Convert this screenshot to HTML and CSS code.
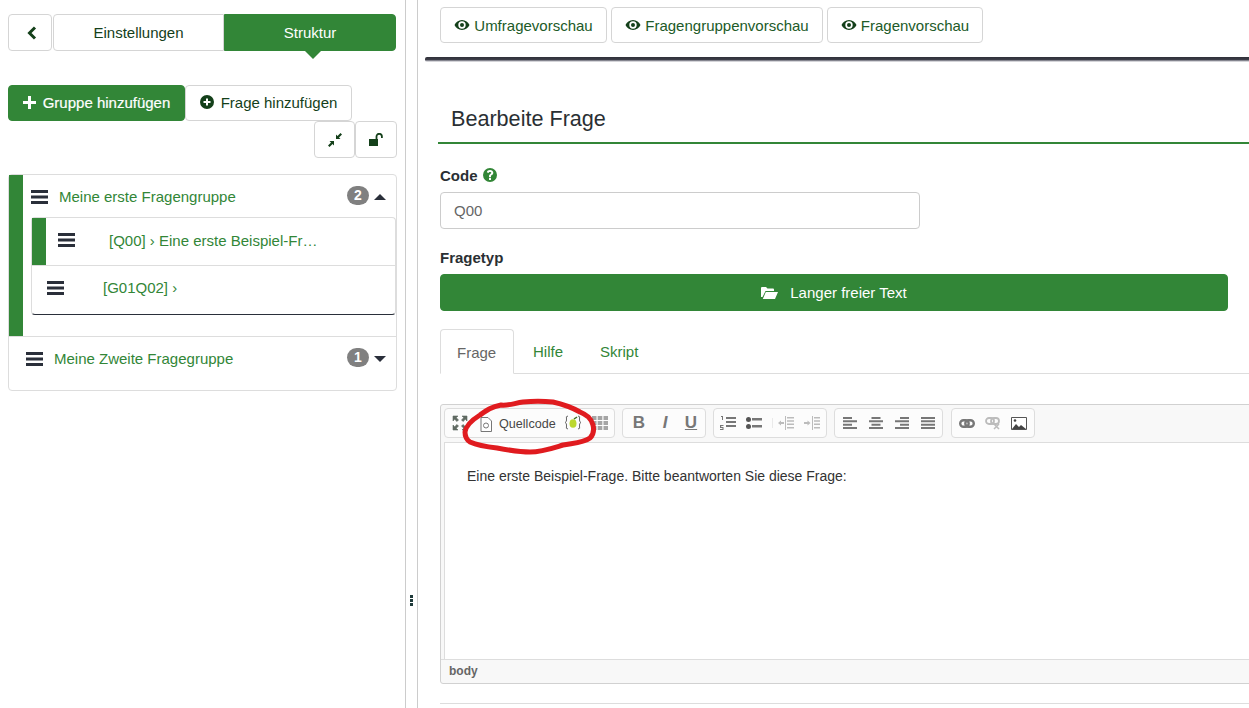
FILE: index.html
```html
<!DOCTYPE html>
<html lang="de">
<head>
    <meta charset="UTF-8">
    <title>Bearbeite Frage</title>
    <link rel="stylesheet" href="styles.css">
</head>
<body>
    <svg class="defs" width="0" height="0">
        <symbol id="eye" viewBox="0 0 16 12"><path d="M8 1C4.500 1 1.800 3.200 .5 6c1.300 2.800 4 5 7.500 5s6.200-2.200 7.500-5C14.200 3.200 11.500 1 8 1zm0 8.700A3.700 3.700 0 1 1 8 2.300a3.700 3.700 0 0 1 0 7.400zM8 4a2 2 0 1 0 0 4 2 2 0 0 0 0-4z" fill-rule="evenodd"/></symbol>
        <symbol id="bars" viewBox="0 0 17 14"><path d="M0 0h17v3H0zM0 5.500h17v3H0zM0 11h17v3H0z"/></symbol>
    </svg>

    <aside class="sidebar">
        <div class="tabs-row">
            <button class="btn back-btn">
                <svg width="10" height="14" viewBox="0 0 10 14"><path d="M8 1.500 2.500 7 8 12.500" fill="none" stroke="#14401a" stroke-width="3"/></svg>
            </button>
            <button class="btn side-tab">Einstellungen</button>
            <button class="btn side-tab side-tab-active">Struktur</button>
        </div>

        <div class="add-row">
            <button class="btn btn-green add-group">
                <svg width="13" height="13" viewBox="0 0 13 13"><path d="M5 0h3v5h5v3H8v5H5V8H0V5h5z" fill="#fff"/></svg>
                Gruppe hinzufügen
            </button>
            <button class="btn add-question">
                <svg width="14" height="14" viewBox="0 0 14 14"><path d="M7 0a7 7 0 1 0 0 14A7 7 0 0 0 7 0zM6 3.500h2V6h2.500v2H8v2.500H6V8H3.500V6H6z" fill="#14401a" fill-rule="evenodd"/></svg>
                Frage hinzufügen
            </button>
        </div>

        <div class="tool-row">
            <button class="btn tool-btn">
                <svg width="14" height="14" viewBox="0 0 14 14"><path d="M8 1.500V6h4.500L11 4.500 14 1.500 12.500 0l-3 3zM6 12.500V8H1.500L3 9.500 0 12.500 1.500 14l3-3z" fill="#14401a"/></svg>
            </button>
            <button class="btn tool-btn">
                <svg width="15" height="13" viewBox="0 0 15 13"><path d="M0 6h9v7H0z" fill="#14401a"/><path d="M7.500 6V3.500a2.700 2.700 0 0 1 5.400 0V5" fill="none" stroke="#14401a" stroke-width="1.800"/></svg>
            </button>
        </div>

        <div class="group-list">
            <div class="group group-open">
                <div class="group-head">
                    <svg class="bars" width="17" height="14"><use href="#bars"/></svg>
                    <span class="group-name">Meine erste Fragengruppe</span>
                    <span class="badge">2</span>
                    <span class="caret-up"></span>
                </div>
                <div class="questions">
                    <div class="question question-active">
                        <svg class="bars" width="17" height="14"><use href="#bars"/></svg>
                        <span class="q-name">[Q00] › Eine erste Beispiel-Fr…</span>
                    </div>
                    <div class="question question-second">
                        <svg class="bars" width="17" height="14"><use href="#bars"/></svg>
                        <span class="q-name">[G01Q02] ›</span>
                    </div>
                </div>
            </div>
            <div class="group group-closed">
                <div class="group-head">
                    <svg class="bars" width="17" height="14"><use href="#bars"/></svg>
                    <span class="group-name">Meine Zweite Fragegruppe</span>
                    <span class="badge">1</span>
                    <span class="caret-down"></span>
                </div>
            </div>
        </div>
    </aside>

    <div class="gutter"><span class="grip"></span></div>

    <main class="content">
        <div class="preview-bar">
            <button class="btn preview-btn preview-survey"><svg width="16" height="12"><use href="#eye"/></svg>Umfragevorschau</button>
            <button class="btn preview-btn preview-group"><svg width="16" height="12"><use href="#eye"/></svg>Fragengruppenvorschau</button>
            <button class="btn preview-btn preview-question"><svg width="16" height="12"><use href="#eye"/></svg>Fragenvorschau</button>
        </div>
        <div class="bar-shadow"></div>

        <div class="form-area">
            <h1 class="page-title">Bearbeite Frage</h1>

            <label class="field-label">Code
                <svg width="14" height="14" viewBox="0 0 14 14"><path d="M7 0a7 7 0 1 0 0 14A7 7 0 0 0 7 0zM6 9.800h2V12H6zM7 2c1.900 0 3.300 1.100 3.300 2.800 0 1.200-.7 1.800-1.500 2.300-.6.400-.8.600-.8 1.200V9H6v-.9c0-1.100.5-1.700 1.300-2.200.6-.4 1-.6 1-1.100S7.800 3.900 7 3.900c-.9 0-1.300.5-1.500 1.200L3.800 4.200C4.200 2.900 5.300 2 7 2z" fill="#328637" fill-rule="evenodd"/></svg>
            </label>
            <input class="code-input" type="text" value="Q00">

            <label class="field-label type-label">Fragetyp</label>
            <button class="btn btn-green type-btn">
                <svg width="17" height="13" viewBox="0 0 17 13"><path d="M0 2q0-1 1-1h4l1.500 1.500H12q1 0 1 1V5H4.500L1.500 11 0 11zM4.800 6H17l-3 7H1.800z" fill="#fff"/></svg>
                Langer freier Text
            </button>

            <nav class="q-tabs">
                <span class="q-tab q-tab-active">Frage</span>
                <span class="q-tab">Hilfe</span>
                <span class="q-tab q-tab-script">Skript</span>
            </nav>

            <div class="editor">
                <div class="toolbar">
                    <div class="tool-group group-source">
                        <span class="tb-icon"><svg width="16" height="16" viewBox="0 0 16 16"><path d="M1 6V1h5L4.300 2.700 6.500 5 5 6.500 2.700 4.300zM15 6V1h-5l1.700 1.700L9.500 5 11 6.500l2.300-2.200zM1 10v5h5l-1.700-1.700L6.500 11 5 9.500l-2.300 2.200zM15 10v5h-5l1.700-1.700L9.500 11l1.500-1.500 2.300 2.200z" fill="#5f6a62" stroke="#5f6a62" stroke-width=".6"/></svg></span>
                        <span class="tb-source">
                            <svg width="12" height="15" viewBox="0 0 12 15"><path d="M1 .5h7l3.500 3.500v10.500H1z" fill="#fff" stroke="#777"/><circle cx="6" cy="8.500" r="2.500" fill="none" stroke="#777"/></svg>
                            Quellcode
                        </span>
                        <span class="tb-plugin">
                            <svg width="18" height="15" viewBox="0 0 18 15"><path d="M4 1Q1.500 1 2.500 4 3 7 1 7.500 3 8 2.500 11 1.500 14 4 14M14 1q2.500 0 1.500 3-.5 3 1.500 3.500-2 .5-1.500 3.500 1 3-1.500 3" fill="none" stroke="#666"/><ellipse cx="9" cy="8.500" rx="3.500" ry="4.300" fill="#bcd82e"/><path d="M10 4l3-2" stroke="#3e6a1e" stroke-width="1.500"/></svg>
                        </span>
                        <span class="tb-icon tb-grid"><svg width="16" height="14" viewBox="0 0 16 14"><path d="M0 0h4.500v4H0zM5.700 0h4.600v4H5.700zM11.500 0H16v4h-4.500zM0 5h4.500v4H0zM5.700 5h4.600v4H5.700zM11.500 5H16v4h-4.500zM0 10h4.500v4H0zM5.700 10h4.600v4H5.700zM11.500 10H16v4h-4.500z" fill="#a5a5a5"/></svg></span>
                    </div>
                    <div class="tool-group group-format">
                        <span class="tb-icon tb-letter">B</span>
                        <span class="tb-icon tb-letter tb-italic">I</span>
                        <span class="tb-icon tb-letter tb-under">U</span>
                    </div>
                    <div class="tool-group group-lists">
                        <span class="tb-icon"><svg width="16" height="14" viewBox="0 0 16 14"><path d="M1 0h2v4H2V1H1zM0 9h3.500v1H1.200v1H3.500v3H0v-1h2.500v-1H0zM6 1h10v2H6zM6 5h10v2H6zM6 9h10v2H6z" fill="#777"/></svg></span>
                        <span class="tb-icon"><svg width="16" height="12" viewBox="0 0 16 12"><circle cx="2.500" cy="2.500" r="2.500" fill="#555"/><circle cx="2.500" cy="9.500" r="2.500" fill="#555"/><path d="M6 1h10v2.500H6zM6 8h10v2.500H6z" fill="#777"/></svg></span>
                        <span class="tb-icon tb-off tb-sep"><svg width="16" height="14" viewBox="0 0 16 14"><path d="M7 0h1v14H7zM0 7l3-2.500V6h3v2H3v1.500zM9 1h7v1.500H9zM9 4.300h7v1.500H9zM9 7.600h7v1.500H9zM9 11h7v1.500H9z" fill="#888"/></svg></span>
                        <span class="tb-icon tb-off"><svg width="16" height="14" viewBox="0 0 16 14"><path d="M8 0h1v14H8zM6.500 7l-3-2.500V6H0v2h3.500v1.500zM10 1h6v1.500h-6zM10 4.300h6v1.500h-6zM10 7.600h6v1.500h-6zM10 11h6v1.500h-6z" fill="#888"/></svg></span>
                    </div>
                    <div class="tool-group">
                        <span class="tb-icon"><svg width="14" height="12" viewBox="0 0 14 12"><path d="M0 0h9v2H0zM0 3.300h14v2H0zM0 6.700h9v2H0zM0 10h14v2H0z" fill="#777"/></svg></span>
                        <span class="tb-icon"><svg width="14" height="12" viewBox="0 0 14 12"><path d="M2.500 0h9v2h-9zM0 3.300h14v2H0zM2.500 6.700h9v2h-9zM0 10h14v2H0z" fill="#777"/></svg></span>
                        <span class="tb-icon"><svg width="14" height="12" viewBox="0 0 14 12"><path d="M5 0h9v2H5zM0 3.300h14v2H0zM5 6.700h9v2H5zM0 10h14v2H0z" fill="#777"/></svg></span>
                        <span class="tb-icon"><svg width="14" height="12" viewBox="0 0 14 12"><path d="M0 0h14v2H0zM0 3.300h14v2H0zM0 6.700h14v2H0zM0 10h14v2H0z" fill="#777"/></svg></span>
                    </div>
                    <div class="tool-group group-insert">
                        <span class="tb-icon"><svg width="16" height="9" viewBox="0 0 16 9"><rect x="1.200" y="1.200" width="8.500" height="6.600" rx="3.300" fill="none" stroke="#777" stroke-width="2.400"/><rect x="6.300" y="1.200" width="8.500" height="6.600" rx="3.300" fill="none" stroke="#777" stroke-width="2.400"/></svg></span>
                        <span class="tb-icon tb-off"><svg width="16" height="13" viewBox="0 0 16 13"><rect x="1" y="1" width="8" height="6" rx="3" fill="none" stroke="#888" stroke-width="1.800"/><rect x="6" y="1" width="8" height="6" rx="3" fill="none" stroke="#888" stroke-width="1.800"/><path d="M9 7l5 5M14 7l-5 5" stroke="#888" stroke-width="1.500"/></svg></span>
                        <span class="tb-icon"><svg width="16" height="13" viewBox="0 0 16 13"><path d="M.5.500h15v12H.5z" fill="#fff" stroke="#555"/><path d="M1 12l4-5 3 3 2-2 5 4z" fill="#444"/><circle cx="4" cy="3.500" r="1.300" fill="#444"/></svg></span>
                    </div>
                </div>
                <div class="editor-body">Eine erste Beispiel-Frage. Bitte beantworten Sie diese Frage:</div>
                <div class="editor-path">body</div>
            </div>

            <hr class="form-rule">
        </div>

        <!-- red marker drawn over the toolbar -->
        <svg class="marker" width="150" height="60" viewBox="0 0 150 60">
            <path d="M46 7C36 9 32 12 25 17 17 22 11 27 10 34 10 39 12 42 15 44 24 48 33 49 42 50 53 52 64 54 75 54 87 54 98 50 108 47 118 45 128 45 135 40 139 36 139 31 138 27 136 20 132 17 125 14 116 9 107 6 98 4 88 3 78 3 68 4 60 5 53 8 46 7" fill="none" stroke="#e01b1f" stroke-width="5" stroke-linecap="round"/>
        </svg>
    </main>
</body>
</html>
```

FILE: styles.css
```css
* {
    box-sizing: border-box;
}

html, body {
    height: 100%;
}

body {
    margin: 0;
    display: flex;
    height: 708px;
    overflow: hidden;
    background-color: #fff;
    font-family: "Liberation Sans", Arial, sans-serif;
    font-size: 15px;
    color: #2a2f33;
}

.defs {
    position: absolute;
}

.btn {
    display: inline-flex;
    align-items: center;
    justify-content: center;
    padding: 0;
    background-color: #fff;
    border: 1px solid #d5d5d5;
    border-radius: 4px;
    font-family: inherit;
    font-size: 15px;
    color: #14401a;
}

.btn-green {
    background-color: #328637;
    border-color: #328637;
    color: #fff;
}

/* left column */
.sidebar {
    flex: 0 0 406px;
    padding: 14px 8px 0;
    border-right: 1px solid #ccc;
}

.tabs-row {
    display: flex;
    width: 388px;
    height: 37px;
}

.back-btn {
    width: 44px;
    margin-right: 1px;
    padding-left: 3px;
}

.side-tab {
    width: 171px;
    border-radius: 4px 0 0 4px;
}

.side-tab-active {
    position: relative;
    width: 172px;
    background-color: #328637;
    border-color: #328637;
    border-radius: 0 4px 4px 0;
    color: #fff;
}

.side-tab-active::after {
    content: "";
    position: absolute;
    left: 79px;
    bottom: -9px;
    border-style: solid;
    border-width: 9px 9px 0;
    border-color: #328637 transparent transparent;
}

.add-row {
    display: flex;
    margin-top: 34px;
    height: 36px;
}

.add-group {
    width: 177px;
    padding-bottom: 2px;
    gap: 7px;
    -webkit-text-stroke: .2px #fff;
}

.add-question {
    width: 167px;
    padding-bottom: 2px;
    gap: 7px;
}

.tool-row {
    display: flex;
    justify-content: flex-end;
    width: 389px;
    height: 37px;
}

.tool-btn {
    width: 41px;
}

.tool-btn + .tool-btn {
    width: 42px;
}

.group-list {
    margin-top: 16px;
    width: 389px;
    border: 1px solid #ddd;
    border-radius: 4px;
}

.group-head {
    display: flex;
    align-items: center;
    height: 42px;
    color: #328637;
}

.group-name {
    flex: 1;
    margin: -2px 0 0 11px;
}

.badge {
    width: 22px;
    height: 19px;
    margin-right: 5px;
    margin-top: -3px;
    border-radius: 10px;
    background-color: #808080;
    color: #fff;
    font-size: 14px;
    font-weight: bold;
    line-height: 19px;
    text-align: center;
}

.caret-up, .caret-down {
    width: 0;
    height: 0;
    margin-right: 10px;
    border-left: 6px solid transparent;
    border-right: 6px solid transparent;
}

.caret-up {
    border-bottom: 6px solid #2a2f3a;
}

.caret-down {
    border-top: 6px solid #2a2f3a;
}

.bars {
    flex: none;
    fill: #2a2f3a;
}

.group-open {
    height: 162px;
    padding-left: 14px;
    border-bottom: 1px solid #ddd;
    box-shadow: inset 14px 0 0 #328637;
}

.group-open .group-head {
    padding: 2px 0 0 8px;
}

.questions {
    margin-left: 8px;
    width: 365px;
    border: 1px solid #ddd;
    border-bottom-color: #2a2f3a;
    border-radius: 4px;
}

.question {
    display: flex;
    align-items: center;
    height: 48px;
    padding-bottom: 3px;
    color: #328637;
}

.question-active {
    padding-left: 26px;
    border-bottom: 1px solid #ddd;
    box-shadow: inset 14px 0 0 #328637;
}

.question-active .q-name {
    margin-left: 34px;
}

.question-second {
    padding-left: 15px;
    padding-bottom: 5px;
}

.question-second .q-name {
    margin-left: 39px;
}

.group-closed {
    height: 53px;
    padding: 1px 0 0 17px;
}

/* gutter between the columns */
.gutter {
    position: relative;
    flex: 0 0 12px;
    border-right: 1px solid #ccc;
}

.grip {
    position: absolute;
    left: 4px;
    top: 595px;
    width: 3px;
    height: 11px;
    background: repeating-linear-gradient(#1f3a3a 0 3px, transparent 3px 4px);
}

/* right column */
.content {
    position: relative;
    flex: 1;
    min-width: 0;
}

.preview-bar {
    display: flex;
    gap: 4px;
    height: 57px;
    padding: 7px 0 0 22px;
}

.preview-btn {
    height: 36px;
    gap: 4px;
    fill: #14401a;
    color: #215a28;
}

.preview-survey {
    width: 167px;
}

.preview-group {
    width: 212px;
}

.preview-question {
    width: 156px;
}

.bar-shadow {
    height: 5px;
    margin-bottom: -1px;
    margin-left: 7px;
    background: linear-gradient(#2f3038 0, #3c3d47 50%, #a9a9b2 80%, #fff 100%);
    border-radius: 2px 0 0 2px;
}

.form-area {
    padding-left: 22px;
}

.page-title {
    margin: 0 0 0 -2px;
    height: 83px;
    padding: 45px 0 0 13px;
    border-bottom: 2px solid #328637;
    font-size: 21.600px;
    font-weight: normal;
    line-height: 26px;
    color: #2a2f33;
}

.field-label {
    display: flex;
    align-items: center;
    gap: 5px;
    height: 16px;
    margin-top: 23px;
    font-weight: bold;
}

.code-input {
    display: block;
    width: 480px;
    height: 37px;
    margin-top: 9px;
    padding: 0 13px;
    border: 1px solid #ccc;
    border-radius: 4px;
    font-family: inherit;
    font-size: 15px;
    color: #666;
}

.type-label {
    margin-top: 20px;
}

.type-btn {
    width: 788px;
    height: 37px;
    margin-top: 9px;
    gap: 12px;
}

.q-tabs {
    display: flex;
    height: 45px;
    margin-top: 18px;
    border-bottom: 1px solid #ddd;
}

.q-tab {
    padding: 14px 18px 0;
    color: #328637;
}

.q-tab-script {
    margin-left: 1px;
}

.q-tab-active {
    width: 74px;
    height: 45px;
    margin-right: 1px;
    padding-left: 16px;
    border: 1px solid #ddd;
    border-bottom-color: #fff;
    border-radius: 4px 4px 0 0;
    color: #666;
}

.editor {
    width: 830px;
    height: 280px;
    margin-top: 30px;
    border: 1px solid #d1d1d1;
    border-radius: 3px;
    background-color: #f8f8f8;
}

.toolbar {
    display: flex;
    gap: 7px;
    height: 37px;
    padding: 3px 0 0 3px;
}

.tool-group {
    display: flex;
    align-items: center;
    height: 30px;
    padding: 0 1px 0 2px;
    background-color: #fcfcfc;
    border: 1px solid #ddd;
    border-radius: 4px;
}

.group-source {
    width: 171px;
    padding-left: 4px;
}

.group-format {
    padding-left: 3px;
}

.group-lists {
    padding-left: 1px;
}

.group-insert {
    margin-left: 1px;
    padding-right: 2px;
}

.tb-icon {
    display: flex;
    align-items: center;
    justify-content: center;
    width: 26px;
}

.group-source .tb-icon {
    width: 22px;
}

.group-source .tb-grid {
    margin-left: 7px;
}

.tb-off {
    opacity: .55;
}

.tb-sep {
    margin-left: 6px;
    box-shadow: -3px 0 0 -2px #ddd;
}

.tb-letter {
    font-size: 17px;
    font-weight: bold;
    color: #777;
}

.tb-italic {
    font-style: italic;
}

.tb-under {
    text-decoration: underline;
}

.tb-source {
    display: flex;
    align-items: center;
    gap: 7px;
    margin-left: 9px;
    padding-top: 2px;
    width: 76px;
    font-size: 12.600px;
    color: #474747;
}

.tb-plugin {
    margin: 2px 0 0 8px;
}

.editor-body {
    height: 217px;
    margin-left: 3px;
    padding: 25px 22px;
    background-color: #fff;
    border-top: 1px solid #ddd;
    border-left: 1px solid #ddd;
    font-size: 14px;
    color: #333;
}

.editor-path {
    height: 24px;
    padding: 4px 8px;
    border-top: 1px solid #ddd;
    font-size: 12px;
    font-weight: bold;
    color: #666;
}

.form-rule {
    margin: 19px 0 0;
    border: 0;
    border-top: 1px solid #ddd;
}

.marker {
    position: absolute;
    left: 37px;
    top: 398px;
}
```
